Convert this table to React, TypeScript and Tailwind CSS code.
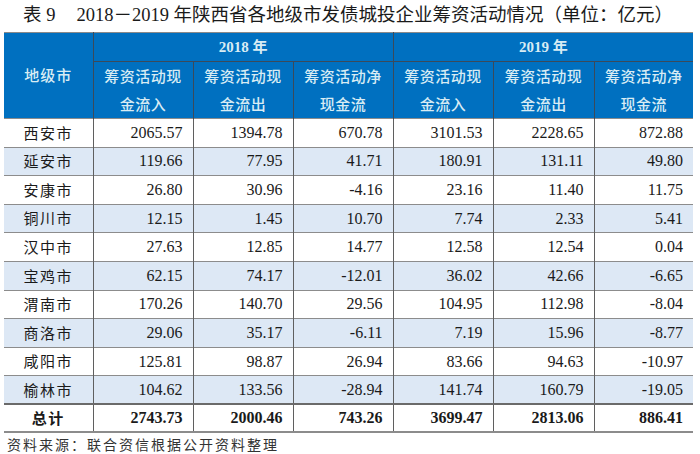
import React from "react";

const rows = [
  ["西安市", "2065.57", "1394.78", "670.78", "3101.53", "2228.65", "872.88"],
  ["延安市", "119.66", "77.95", "41.71", "180.91", "131.11", "49.80"],
  ["安康市", "26.80", "30.96", "-4.16", "23.16", "11.40", "11.75"],
  ["铜川市", "12.15", "1.45", "10.70", "7.74", "2.33", "5.41"],
  ["汉中市", "27.63", "12.85", "14.77", "12.58", "12.54", "0.04"],
  ["宝鸡市", "62.15", "74.17", "-12.01", "36.02", "42.66", "-6.65"],
  ["渭南市", "170.26", "140.70", "29.56", "104.95", "112.98", "-8.04"],
  ["商洛市", "29.06", "35.17", "-6.11", "7.19", "15.96", "-8.77"],
  ["咸阳市", "125.81", "98.87", "26.94", "83.66", "94.63", "-10.97"],
  ["榆林市", "104.62", "133.56", "-28.94", "141.74", "160.79", "-19.05"],
];

const total = ["总计", "2743.73", "2000.46", "743.26", "3699.47", "2813.06", "886.41"];

const subHeads = [
  ["筹资活动现", "金流入"],
  ["筹资活动现", "金流出"],
  ["筹资活动净", "现金流"],
];

const cjk = "font-['Noto_Sans_CJK_SC',sans-serif]";
const serif = "font-['Liberation_Serif','Noto_Sans_CJK_SC',serif]";

export default function App() {
  return (
    <div className="h-[454px] w-[700px] bg-white">
      <h1
        className={`flex whitespace-nowrap pl-[23px] pt-[3px] text-[18.5px] leading-[24px] text-[#1a1a1a] ${serif}`}
      >
        <span>表 9</span>
        <span className="ml-[21px]">2018－2019 年陕西省各地级市发债城投企业筹资活动情况</span>
        <span>（单位：亿元）</span>
      </h1>

      <table className="ml-[4px] mt-[5px] w-[689px] table-fixed border-collapse border-t border-[#8a8a8a] text-[15px]">
        <colgroup>
          <col className="w-[89px]" />
          <col className="w-[100px]" />
          <col className="w-[100px]" />
          <col className="w-[100px]" />
          <col className="w-[100px]" />
          <col className="w-[101px]" />
          <col className="w-[99px]" />
        </colgroup>
        <thead className="bg-[#0070c0] text-[#d8ecf4]">
          <tr className="h-[29px]">
            <th
              rowSpan={2}
              className={`border-r border-[#3b4a5a] font-medium ${cjk} text-[15px] tracking-[1px]`}
            >
              地级市
            </th>
            <th
              colSpan={3}
              className={`border-b border-r border-[#3b4a5a] font-bold ${serif}`}
            >
              2018 年
            </th>
            <th colSpan={3} className={`border-b border-[#3b4a5a] font-bold ${serif}`}>
              2019 年
            </th>
          </tr>
          <tr className="h-[55px]">
            {[...subHeads, ...subHeads].map((h, i) => (
              <th
                key={i}
                className={`border-[#3b4a5a] ${i < 5 ? "border-r" : ""} font-medium ${cjk} text-[15px] leading-[28px] tracking-[0.5px]`}
              >
                <div>{h[0]}</div>
                <div>{h[1]}</div>
              </th>
            ))}
          </tr>
        </thead>
        <tbody className="text-[#1a1a1a]">
          {rows.map((r, ri) => (
            <tr
              key={r[0]}
              className={`h-[28.6px] border-t border-[#8c8c8c] ${ri % 2 === 1 ? "bg-[#dde8f5]" : "bg-white"}`}
            >
              {r.map((c, ci) =>
                ci === 0 ? (
                  <td
                    key={ci}
                    className={`border-r border-[#5f5f5f] text-center ${cjk} text-[15px] tracking-[1.5px]`}
                  >
                    {c}
                  </td>
                ) : (
                  <td
                    key={ci}
                    className={`${ci < 6 ? "border-r border-[#5f5f5f]" : ""} pr-[10px] text-right ${serif} text-[16px]`}
                  >
                    {c}
                  </td>
                )
              )}
            </tr>
          ))}
          <tr className="h-[28px] border-b-2 border-t-2 border-b-[#8c8c8c] border-t-[#6a6a6a] bg-white">
            {total.map((c, ci) =>
              ci === 0 ? (
                <td
                  key={ci}
                  className={`border-r border-[#5f5f5f] text-center font-bold ${cjk} text-[15px] tracking-[1.5px]`}
                >
                  {c}
                </td>
              ) : (
                <td
                  key={ci}
                  className={`${ci < 6 ? "border-r border-[#5f5f5f]" : ""} pr-[10px] text-right font-bold ${serif} text-[16px]`}
                >
                  {c}
                </td>
              )
            )}
          </tr>
        </tbody>
      </table>

      <p
        className={`pl-[7px] pt-[1px] text-[14px] leading-[20px] tracking-[2px] text-[#333] ${cjk}`}
      >
        资料来源：联合资信根据公开资料整理
      </p>
    </div>
  );
}
